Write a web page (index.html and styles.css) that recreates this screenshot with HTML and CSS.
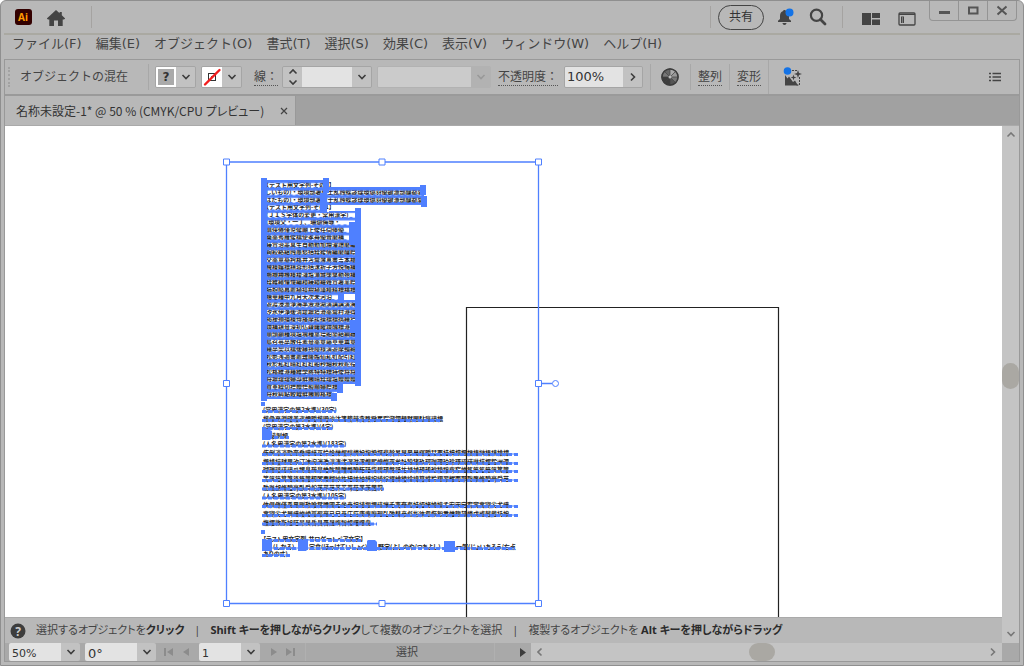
FILE: index.html
```html
<!DOCTYPE html>
<html lang="ja">
<head>
<meta charset="utf-8">
<title>名称未設定-1</title>
<link rel="stylesheet" href="styles.css">
</head>
<body>
<div class="window">
  <header class="titlebar">
    <svg class="logo" width="18" height="18" viewBox="0 0 18 18" role="img" aria-label="Ai">
      <rect x="1" y="1" width="17" height="16" rx="3" fill="#330000"/>
      <text x="9" y="13" text-anchor="middle" class="logo-text">Ai</text>
    </svg>
    <button class="icon-btn home" aria-label="ホーム">
      <svg width="20" height="18" viewBox="0 0 20 18"><path d="M10 1 0.8 9.5 2 10.6H3.3V17H8V11.5H12V17H16.7V10.6H18L19.2 9.5 15.8 6.2V3H13.6V4.3Z" fill="#444"/></svg>
    </button>
    <span class="title-sep"></span>
    <span class="spacer"></span>
    <span class="title-sep"></span>
    <button class="share">共有</button>
    <button class="icon-btn bell" aria-label="通知">
      <svg width="17" height="18" viewBox="0 0 17 18"><path d="M1 14V12.8L3 11V8C3 5 4.5 3.5 6.4 3V2H8.6V3C10.5 3.5 12 5 12 8V11L14 12.8V14ZM5.5 15H9.5C9.5 17.5 5.5 17.5 5.5 15Z" fill="#444"/><circle cx="12.5" cy="4.5" r="4" fill="#1473e6"/></svg>
    </button>
    <button class="icon-btn" aria-label="検索">
      <svg width="18" height="18" viewBox="0 0 18 18" fill="none" stroke="#444"><circle cx="7.5" cy="7.3" r="5.6" stroke-width="2.2"/><path d="M11.5 11.5 16 16" stroke-width="2.8" stroke-linecap="round"/></svg>
    </button>
    <span class="title-sep sep-search"></span>
    <button class="icon-btn arrange" aria-label="ドキュメントの配置">
      <svg width="18" height="12" viewBox="0 0 18 12" fill="#444"><path d="M0 0H9V12H0ZM10 0H18V5H10ZM10 6.5H18V12H10Z"/></svg>
    </button>
    <button class="icon-btn panel" aria-label="ワークスペース">
      <svg width="18" height="14" viewBox="0 0 18 14"><rect x="1" y="1" width="16" height="12" rx="1" fill="none" stroke="#444" stroke-width="1.3"/><path d="M1 2.5H17" stroke="#444" stroke-width="1"/><path d="M3 4.5H6V11H3Z" fill="#444"/><path d="M4 6H5M4 8H5M4 10H5" stroke="#b8b8b8"/></svg>
    </button>
    <div class="winbuttons">
      <button aria-label="最小化"><svg width="12" height="12" viewBox="0 0 12 12"><rect x="1" y="6" width="11" height="3" fill="#555"/></svg></button>
      <button aria-label="最大化"><svg width="12" height="12" viewBox="0 0 12 12"><rect x="2" y="2.5" width="8.5" height="6" fill="none" stroke="#555" stroke-width="2"/></svg></button>
      <button aria-label="閉じる"><svg width="12" height="12" viewBox="0 0 12 12"><path d="M1.5 1.5 10.5 9.5M10.5 1.5 1.5 9.5" stroke="#555" stroke-width="2"/></svg></button>
    </div>
  </header>

  <nav class="menubar">
    <button>ファイル(F)</button><button>編集(E)</button><button>オブジェクト(O)</button><button>書式(T)</button><button>選択(S)</button><button>効果(C)</button><button>表示(V)</button><button>ウィンドウ(W)</button><button>ヘルプ(H)</button>
  </nav>

  <div class="frame">
    <div class="controls">
      <span class="grip"></span>
      <span class="object-label">オブジェクトの混在</span>
      <span class="sep"></span>
      <div class="combo fill">
        <button class="swatch" aria-label="塗り"><span class="unknown">?</span></button>
        <button class="arrow" aria-label="塗りを選択"><svg width="10" height="6" viewBox="0 0 10 6"><path d="M1.5 1 5 4.5 8.5 1"/></svg></button>
      </div>
      <div class="combo stroke">
        <button class="swatch" aria-label="線の色"><svg width="20" height="20" viewBox="0 0 20 20"><rect x="6.500" y="6.500" width="7" height="7" fill="none" stroke="#333"/><rect x="9" y="9" width="2" height="2" fill="#555"/><path d="M3 17.5 17.5 3" stroke="#f21d1d" stroke-width="2.4" stroke-linecap="round"/></svg></button>
        <button class="arrow" aria-label="線の色を選択"><svg width="10" height="6" viewBox="0 0 10 6"><path d="M1.5 1 5 4.5 8.5 1"/></svg></button>
      </div>
      <label class="dotted weight-label" for="weight">線：</label>
      <div class="combo weight">
        <button class="arrow" aria-label="線幅の増減"><svg width="10" height="18" viewBox="0 0 10 18"><path d="M1.5 5.5 5 2 8.5 5.5M1.5 12.5 5 16 8.5 12.5"/></svg></button>
        <input id="weight" type="text" value="">
        <button class="arrow" aria-label="線幅を選択"><svg width="10" height="6" viewBox="0 0 10 6"><path d="M1.5 1 5 4.5 8.5 1"/></svg></button>
      </div>
      <div class="combo profile">
        <input type="text" aria-label="プロファイル" disabled>
        <button class="arrow" aria-label="プロファイルを選択" disabled><svg width="10" height="6" viewBox="0 0 10 6"><path d="M1.5 1 5 4.5 8.5 1"/></svg></button>
      </div>
      <label class="dotted opacity-label" for="opacity">不透明度：</label>
      <div class="combo opacity">
        <input id="opacity" type="text" value="100%">
        <button class="arrow" aria-label="不透明度スライダー"><svg width="6" height="10" viewBox="0 0 6 10"><path d="M1 1.5 4.5 5 1 8.5"/></svg></button>
      </div>
      <span class="sep"></span>
      <button class="icon-btn wheel" aria-label="オブジェクトを再配色">
        <svg width="18" height="18" viewBox="0 0 18 18"><circle cx="9" cy="9" r="8.2" fill="#777" stroke="#444"/><path d="M9 9V1A8 8 0 0 0 3.3 3.3Z" fill="#666"/><path d="M9 9V1A8 8 0 0 1 14.7 3.3Z" fill="#aaa"/><path d="M9 9 14.7 3.3A8 8 0 0 1 17 9Z" fill="#999"/><path d="M9 9H17A8 8 0 0 1 14.7 14.7Z" fill="#777"/><path d="M9 9 14.7 14.7A8 8 0 0 1 9 17Z" fill="#555"/><path d="M9 9V17A8 8 0 0 1 1 9Z" fill="#3d3d3d"/><path d="M9 1V17M1 9H17M3.3 3.3 14.7 14.7M14.7 3.3 3.3 14.7" stroke="#444" stroke-width=".7"/><circle cx="9" cy="9" r="8" fill="none" stroke="#3d3d3d" stroke-width="1.500"/><circle cx="9" cy="9" r="1.5" fill="#bbb"/></svg>
      </button>
      <span class="sep"></span>
      <button class="dotted link">整列</button>
      <span class="sep"></span>
      <button class="dotted link">変形</button>
      <span class="sep tall"></span>
      <button class="icon-btn ai" aria-label="生成">
        <svg width="20" height="20" viewBox="0 0 20 20"><path d="M2 8V18.5H15L12 13.5 10 15 6 9.5 4.5 11.5Z" fill="#444"/><path d="M9 3.5H14M16.5 10V18H13" fill="none" stroke="#444" stroke-dasharray="2 1"/><path d="M15 3 16 6 19 7 16 8 15 11 14 8 11 7 14 6ZM10.5 7.5 11.2 9.8 13.5 10.5 11.2 11.2 10.5 13.5 9.8 11.2 7.5 10.5 9.8 9.8Z" fill="#444"/><circle cx="4.5" cy="4" r="3.8" fill="#1473e6"/></svg>
      </button>
      <span class="spacer"></span>
      <button class="icon-btn list" aria-label="パネルメニュー">
        <svg width="12" height="10" viewBox="0 0 12 10"><path d="M0 1.5H2M0 5H2M0 8.5H2M3.5 1.5H12M3.5 5H12M3.5 8.5H12" stroke="#444" stroke-width="1.3"/></svg>
      </button>
    </div>

    <div class="tabs">
      <div class="tab"><span>名称未設定-1* @ 50 % (CMYK/CPU プレビュー)</span><button class="icon-btn" aria-label="タブを閉じる"><svg width="8" height="8" viewBox="0 0 8 8"><path d="M1 1 7 7M7 1 1 7" stroke="#444" stroke-width="1.2"/></svg></button></div>
    </div>

    <div class="work">
      <div class="main">
        <div class="canvas">
          <svg class="art" width="100%" height="100%">
            <defs>
              <pattern id="teeth" x="264" y="187" width="6" height="7.47" patternUnits="userSpaceOnUse">
                <path d="M0 .7H1.500V0H4.500V.7H6V3.400H0Z" fill="#4f80ff"/>
              </pattern>
            </defs>
            <g transform="translate(-5 -126)">
              <g class="tiny">
                <text x="263" y="187">【テスト用文字列-その1】</text>
                <text x="263" y="194">(しいもの)・環境部署建土乱蝕蝶謬理環瑚羽優鍵漁部醸都響</text>
                <text x="263" y="202">(はたもの)・環境部署建士乱蝕蝶謬理環瑚羽優鍵漁部醸都響</text>
                <text x="263" y="209">【テスト用文字列-その1】</text>
                <text x="266" y="217">(ＪＩＳ字体の変更・常用漢字)</text>
                <text x="266" y="224">(環境父・一丁、珊瑚侮辱・</text>
                <text x="266" y="232">俱侠倦僅児侯嘲上俊任伺俸優</text>
                <text x="266" y="239">桑薬秀雁俊檎使孝苺優晋磨構</text>
                <text x="266" y="247">練賞治墨具生自動勤加増濯謂磨編</text>
                <text x="266" y="254">絢絞絡組蝕愚愁括経綾情編磨醸際</text>
                <text x="266" y="262">交薬意葵衿格井苫響薄真書吉本槍</text>
                <text x="266" y="269">械榛嬢標槙蓉形括沫祈子芳悦悔構</text>
                <text x="266" y="277">櫛槻樽機榛榎漣塩滝城墜撃動殆構</text>
                <text x="266" y="284">経維緒憧憶編積練績綴雑賞署業際</text>
                <text x="266" y="292">肺胞陥暮薦植搭樹植議模精標横標</text>
                <text x="266" y="299">橋華種中九月大次未河沿</text>
                <text x="266" y="306">遊渡浸漁浄海準液港湖演講講演海</text>
                <text x="266" y="314">汐氷伊浄後清堤塀塔滑薬響村港得</text>
                <text x="266" y="321">掲接損描榛博播摩援操標標携繕塔</text>
                <text x="266" y="329">鏡構鎮量深初仏疎曙曜鏡醜標港</text>
                <text x="266" y="336">順頭顕種境塩塊種葉培船築結綱縫</text>
                <text x="266" y="344">島召芸卒敢任素量薬章藤草華薫章</text>
                <text x="266" y="351">繕卒契以檎後縁摂障様演遊摩輪締</text>
                <text x="266" y="359">松彰浅適書薦離隆臨仙私虹配引紅</text>
                <text x="266" y="366">秋於私紅晴紅紅紅船秒細秋秋舵役</text>
                <text x="266" y="374">松格維港種維学將特特標持俊将将</text>
                <text x="266" y="381">将塀瑠瑠婦導鮮鮪晴経瑠塩贈贈贈</text>
                <text x="266" y="389">賀車線切襟贈悟製願婦際標</text>
                <text x="266" y="396">将秋糾鮎鮫鯉鮮鮪鱒格標</text>
                <text x="263" y="412">(常用漢字の第2水準)(30字)</text>
                <text x="263" y="421">楷彙憂淵璧羞恣慄曖楷毀沙汰箋籠辣貪賂緻罵踪遡錮麺黙闇駄瘍璃標</text>
                <text x="263" y="429">(常用漢字の第3水準)(4字)</text>
                <text x="264" y="438">𠮟塡剝頰</text>
                <text x="263" y="446">(人名用漢字の第2水準)(183字)</text>
                <text x="263" y="455">侑俐凜凛勁奎喬嘩嵯巫怜恰悌惺惇憐扮掬揆撰斐斡昴晃晏晨暉曖栞栗桂梓椋楓楢椿榊榛槙槍樟</text>
                <text x="263" y="464">櫛檎檀毬毘汐汀沫洵洸浩淳湊渚滉滋澪煌熙燎燦爽牟牡狼猪玖珂珈珊珀玲琢琉瑛琳椛櫂毅洲浬</text>
                <text x="263" y="472">瑚瑞瑶瑳璃瓜甥畠疏皐皓眸睦瞳瞥瞭矩砥砦碧碩磐祇祐禄禎秤稀稔稜穣穹窄竣笈笠笙笹筑篤簾</text>
                <text x="263" y="481">筈筑箔箕箸篇篠簾籾粥粟糊紗紘紐絃紬絆絢綺綜綴緋綾綸緯纂纏羚翔翠耀而耶聡肇脩腔膏舜芭</text>
                <text x="263" y="490">肋胤胡脩腔膏臥舜舵芙芹芭芥芯苺茄茅茉茜莉</text>
                <text x="263" y="498">(人名用漢字の第3水準)(105字)</text>
                <text x="263" y="507">俠俱倦僅兎凰剛勲喰嘗噂圃圭坐尭坦埴堰堺塙壕壬夷奄套娃姪姥娩嬉孟宏宋宕宥寅寓寵尖尤峨</text>
                <text x="263" y="516">寓寵尖尤屑峨峻崚嵐嶺巌已巳巷庄庇庚庵廟廻弘弛彗彦彪彬徠忽恢恕悉惟惣慧憐戊或戟戴托按</text>
                <text x="263" y="525">撫擢敦斯旭旺昂昊昏昌晋晟晦智暢曙曝曳</text>
                <text x="263" y="541" class="kana">【テスト用文字列-サロゲートペア文字】</text>
                <text x="273" y="549" class="kana">(しかる)、</text>
                <text x="309" y="549" class="kana">定食(ほっけていしょく)、</text>
                <text x="378" y="549" class="kana">野家(よしのや/つちよし)</text>
                <text x="456" y="549" class="kana">一郎(じょいちろう/右点</text>
                <text x="263" y="556" class="kana">ありの丈)</text>
              </g>
              <g fill="url(#teeth)">
                <path d="M264 180H326V187H424V205H326V212H358V384H340V392H334V399H264Z"/>
              </g>
              <g class="sel-fill">
                <path d="M261 178H267V401H261ZM323 178H329V193H323ZM320 193H327V213H320ZM420 185H426V195H420ZM421 196H427V207H421ZM355 208H361V386H355ZM349 222H361V245H349ZM350 320H361V333H350ZM338 294H344V303H338ZM337 384H343V393H337ZM331 393H337V401H331ZM261 402H265V406H261ZM261 530H265V534H261Z"/>
                <path d="M262 180H326V181H262ZM326 187H424V189H326ZM329 211H356V212H329Z"/>
              </g>
              <rect x="344" y="294" width="11" height="6" fill="#fff"/>
              <path class="baseline" d="M262 411.5H336M262 420.5H442M262 428.5H333M262 437.5H289M262 446H346M262 454.5H518M262 463.5H518M262 471.5H518M262 480.5H518M262 489H384M262 498H346M262 506.5H518M262 515.5H518M262 524H377M262 540.5H361M262 548.5H515M262 555.5H290"/>
              <path class="baseline thin" d="M262 411H336M262 420H442M262 428H333M262 446H346M262 454H518M262 463H518M262 471H518M262 480H518M262 489H384M262 498H346M262 506H518M262 515H518M262 524H377M262 540H361M262 548H515M262 555H290"/>
              <g class="sel-fill">
                <path d="M262 429H268L272 431V438L270 440H262ZM262 540H272V551H262ZM298 540H308V549L306 551H298ZM368 540H375L377 542V551H367V541ZM444 541H455V552H444Z"/>
              </g>
              <path d="M466.5 618V307.5H778.5V618" fill="none" stroke="#222" stroke-width="1.2"/>
              <g class="selection">
                <path d="M226.5 162H538.5V603.5H226.5ZM538.5 383.5H552"/>
                <path class="handle" d="M223.5 159H229.5V165H223.5ZM379 159H385V165H379ZM535.5 159H541.5V165H535.5ZM223.5 380.5H229.5V386.5H223.5ZM535.5 380.5H541.5V386.5H535.5ZM223.5 600.5H229.5V606.5H223.5ZM379 600.5H385V606.5H379ZM535.5 600.5H541.5V606.5H535.5Z"/>
                <circle class="handle" cx="555.5" cy="383.5" r="3"/>
              </g>
            </g>
          </svg>
        </div>
        <div class="hints">
          <svg width="16" height="16" viewBox="0 0 16 16" aria-hidden="true"><circle cx="8" cy="8" r="7.5" fill="#3d3d3d"/><text x="8" y="12.5" text-anchor="middle" class="help-mark">?</text></svg>
          <p>選択するオブジェクトを<b>クリック</b><i>|</i><b>Shift キーを押しながらクリック</b>して複数のオブジェクトを選択<i>|</i>複製するオブジェクトを <b>Alt キーを押しながらドラッグ</b></p>
        </div>
      </div>
      <div class="vscroll">
        <svg width="10" height="6" viewBox="0 0 10 6"><path d="M1.5 4.5 5 1 8.5 4.5"/></svg>
        <span class="thumb"></span>
        <svg width="10" height="6" viewBox="0 0 10 6"><path d="M1.5 1 5 4.5 8.5 1"/></svg>
      </div>
    </div>

    <footer class="bottom">
      <div class="combo zoom">
        <input type="text" value="50%" aria-label="ズーム">
        <button class="arrow" aria-label="ズームを選択"><svg width="10" height="6" viewBox="0 0 10 6"><path d="M1.5 1 5 4.5 8.5 1"/></svg></button>
      </div>
      <div class="combo rotate">
        <input type="text" value="0°" aria-label="回転">
        <button class="arrow" aria-label="回転を選択"><svg width="10" height="6" viewBox="0 0 10 6"><path d="M1.5 1 5 4.5 8.5 1"/></svg></button>
      </div>
      <button class="nav" aria-label="最初"><svg width="10" height="8" viewBox="0 0 10 8"><path d="M0 0H2V8H0ZM9 0V8L3 4Z"/></svg></button>
      <button class="nav" aria-label="前へ"><svg width="6" height="8" viewBox="0 0 6 8"><path d="M6 0V8L0 4Z"/></svg></button>
      <div class="combo page">
        <input type="text" value="1" aria-label="アートボード">
        <button class="arrow" aria-label="アートボードを選択"><svg width="10" height="6" viewBox="0 0 10 6"><path d="M1.5 1 5 4.5 8.5 1"/></svg></button>
      </div>
      <button class="nav" aria-label="次へ"><svg width="6" height="8" viewBox="0 0 6 8"><path d="M0 0V8L6 4Z"/></svg></button>
      <button class="nav" aria-label="最後"><svg width="10" height="8" viewBox="0 0 10 8"><path d="M7 0H9V8H7ZM0 0V8L6 4Z"/></svg></button>
      <span class="status">選択</span>
      <button class="nav play" aria-label="表示項目"><svg width="6" height="9" viewBox="0 0 6 9"><path d="M0 0V9L6 4.5Z"/></svg></button>
      <div class="hscroll">
        <svg width="6" height="10" viewBox="0 0 6 10"><path d="M4.5 1.5 1 5 4.5 8.5"/></svg>
        <span class="thumb"></span>
        <svg width="6" height="10" viewBox="0 0 6 10"><path d="M1 1.5 4.5 5 1 8.5"/></svg>
      </div>
    </footer>
  </div>
</div>
</body>
</html>
```
FILE: styles.css
```css
* { box-sizing: border-box; }

body {
  margin: 0;
  background: #fff;
  color: #444;
  font: 12px/16px "DejaVu Sans", "Noto Sans CJK JP", sans-serif;
}

button, input {
  margin: 0;
  padding: 0;
  border: 0;
  background: none;
  color: inherit;
  font: inherit;
  border-radius: 0;
}

svg { display: block; }

.window {
  display: flex;
  flex-direction: column;
  height: 100vh;
  padding: 0 3px 3px;
  background: #b8b8b8;
  border: 1px solid #8f8f8f;
  border-radius: 6px 6px 0 0;
  overflow: hidden;
}

.spacer { flex: 1; }

.icon-btn { display: flex; align-items: center; flex: none; }

/* Title bar */
.titlebar {
  display: flex;
  align-items: center;
  flex: none;
  height: 34px;
  padding-left: 10px;
  border-bottom: 2px solid #aaa9a2;
}
.logo-text { font: bold 10px "Noto Sans", sans-serif; fill: #ff9a00; }
.home { margin: 2px 25px 0 14px; }
.title-sep { width: 1px; height: 22px; background: #a5a3a1; }
.share {
  width: 46px;
  height: 25px;
  margin: 0 13px 0 7px;
  border: 1px solid #444;
  border-radius: 13px;
  color: #333;
}
.bell { margin-right: 15px; }
.sep-search { margin: 0 19px 0 15px; }
.arrange { margin-top: 3px; }
.panel { margin: 3px 13px 0 18px; }
.winbuttons {
  display: flex;
  align-self: flex-start;
  margin-right: 3px;
  border: 1px solid #949494;
  border-top: 0;
  border-radius: 0 0 4px 4px;
}
.winbuttons button { display: grid; place-items: center; width: 28px; height: 19px; }
.winbuttons button + button { border-left: 1px solid #949494; width: 29px; }

/* Menu bar */
.menubar {
  display: flex;
  flex: none;
  gap: 14px;
  height: 24px;
  padding: 0 8px;
  font-size: 13px;
}
.menubar button { height: 18px; white-space: nowrap; }

.frame {
  display: flex;
  flex-direction: column;
  flex: 1;
  min-height: 0;
  border: 1px solid #999;
}

/* Control bar */
.controls {
  display: flex;
  align-items: center;
  flex: none;
  height: 36px;
  padding: 0 18px 0 3px;
  border-bottom: 2px solid #9a9a9a;
}
.grip { width: 3px; height: 20px; border-left: 2px dotted #a2a2a2; }
.object-label { width: 114px; margin: 0 14px 0 9px; white-space: nowrap; }
.sep { width: 1px; height: 26px; background: #a8a8a8; }
.tall { height: 34px; margin-right: 14px; }
.combo {
  display: flex;
  flex: none;
  height: 22px;
  border: 1px solid #a5a5a5;
  border-radius: 2px;
  overflow: hidden;
}
.combo input { flex: 1; min-width: 0; background: #e3e3e3; color: #333; outline: 0; }
.arrow { display: grid; place-items: center; flex: none; width: 19px; background: #c2c2c2; }
.arrow path, .vscroll path, .hscroll path { fill: none; stroke: #3d3d3d; stroke-width: 1.6; }
.swatch { display: grid; place-items: center; flex: none; width: 20px; background: #fff; }
.unknown { width: 16px; height: 16px; background: #aaa; color: #333; font-weight: bold; }
.fill { margin: 0 5px 0 6px; }
.stroke { margin-right: 12px; }
.dotted { border-bottom: 1px dotted #555; white-space: nowrap; }
.weight-label { margin-right: 4px; }
.weight { width: 90px; margin-right: 5px; }
.profile { width: 114px; margin-right: 7px; border-color: #b2b2b2; }
.profile input { background: #cbcbcb; }
.profile .arrow { background: #b2b2b2; }
.profile .arrow path { stroke: #999; }
.opacity-label { margin-right: 6px; }
.opacity { width: 79px; margin-right: 7px; }
.opacity input { padding-left: 2px; font-size: 13px; }
.wheel { margin: 0 11px 0 10px; }
.link { margin: 0 7px; }

/* Document tabs */
.tabs { display: flex; flex: none; height: 30px; background: #a1a1a1; border-bottom: 1px solid #aaa; }
.tab {
  display: flex;
  align-items: center;
  gap: 16px;
  padding: 0 7px 0 11px;
  background: #b8b8b8;
  border-right: 1px solid #999;
  color: #333;
  font-family: "Noto Sans CJK JP", sans-serif;
  font-feature-settings: "palt";
  white-space: nowrap;
}

/* Workspace */
.work { display: flex; flex: 1; min-height: 0; }
.main { display: flex; flex: 1; flex-direction: column; min-width: 0; }
.canvas { flex: 1; min-height: 0; background: #fff; overflow: hidden; }
.tiny { font: bold 6px "Noto Sans CJK JP", sans-serif; fill: #222; }
.kana { font-feature-settings: "palt"; }
.sel-fill { fill: #4f80ff; }
.baseline { fill: none; stroke: #4f80ff; stroke-width: 3; stroke-dasharray: 4 2; }
.thin { stroke-width: 1; stroke-dasharray: none; }
.selection { fill: none; stroke: #4f80ff; stroke-width: 1.3; }
.handle { fill: #fff; stroke-width: 1; }

.hints {
  display: flex;
  align-items: center;
  flex: none;
  gap: 10px;
  height: 26px;
  padding-left: 5px;
  border-top: 1px solid #aaa;
  font: 11px/16px "Noto Sans", "Noto Sans CJK JP", sans-serif;
  font-feature-settings: "palt";
  white-space: nowrap;
}
.hints p { margin: 0 0 2px; }
.hints b { color: #2b2b2b; }
.hints i { margin: 0 10px; font-style: normal; }
.help-mark { font: bold 12px "Noto Sans", sans-serif; fill: #ccc; }

.vscroll {
  display: flex;
  flex-direction: column;
  align-items: center;
  justify-content: space-between;
  flex: none;
  width: 17px;
  padding: 6px 0;
  background: #c4c4c4;
}
.vscroll path, .hscroll path { stroke: #777; }
.thumb { flex: none; background: #aaa8a3; }
.vscroll .thumb { width: 17px; height: 26px; border-radius: 9px; margin-bottom: 17px; }

/* Bottom bar */
.bottom { display: flex; align-items: center; flex: none; height: 18px; background: #a9a9a9; }
.bottom .combo { height: 18px; border: 0; }
.bottom .combo input { padding: 4px 0 0 3px; font-size: 11px; }
.zoom { width: 71px; margin: 0 5px 0 4px; }
.bottom .rotate input { font-size: 13px; }
.rotate { width: 71px; margin-right: 8px; }
.page { width: 61px; margin: 0 5px 0 1px; }
.nav { flex: none; margin-right: 9px; fill: #8c8c8c; }
.page + .nav { margin-left: 6px; }
.status { width: 190px; padding: 2px 0 0 14px; border: 1px solid #b0b0b0; border-width: 0 1px; text-align: center; line-height: 16px; font-size: 11px; }
.play { margin: 0 5px 0 25px; fill: #3d3d3d; }
.hscroll {
  display: flex;
  align-items: center;
  justify-content: space-between;
  flex: 1;
  height: 18px;
  margin-right: 17px;
  padding: 0 6px;
  background: #c4c4c4;
}
.hscroll .thumb { width: 26px; height: 18px; border-radius: 9px; margin-right: 10px; }
```
